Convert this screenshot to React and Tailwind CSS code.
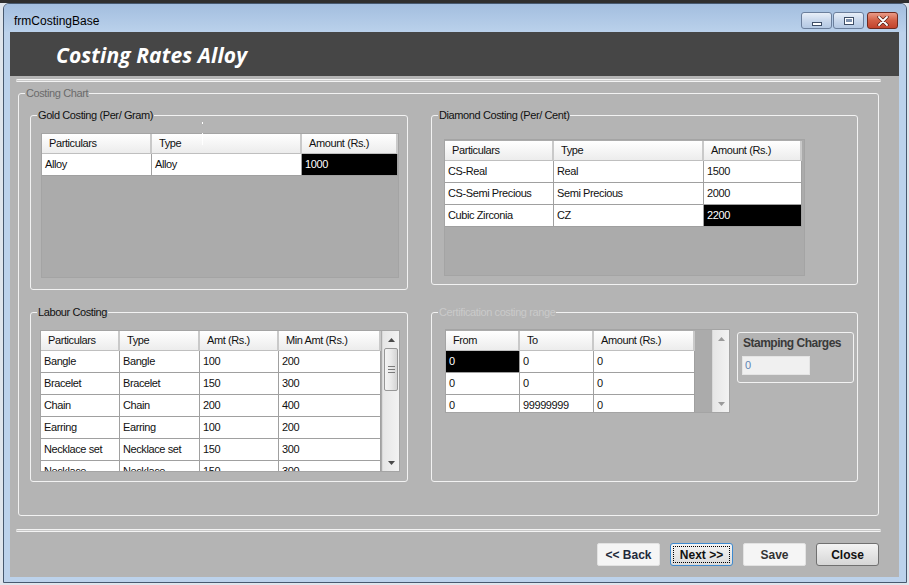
import React from 'react';

const goldCols = [
  { label: 'Particulars', w: 'w-[110px]' },
  { label: 'Type', w: 'w-[150px]' },
  { label: 'Amount (Rs.)', w: 'w-[96px]' },
];
const diamondCols = [
  { label: 'Particulars', w: 'w-[109px]' },
  { label: 'Type', w: 'w-[150px]' },
  { label: 'Amount (Rs.)', w: 'w-[98px]' },
];
const labourCols = [
  { label: 'Particulars', w: 'w-[79px]' },
  { label: 'Type', w: 'w-[80px]' },
  { label: 'Amt (Rs.)', w: 'w-[79px]' },
  { label: 'Min Amt (Rs.)', w: 'w-[102px]' },
];
const certCols = [
  { label: 'From', w: 'w-[74px]' },
  { label: 'To', w: 'w-[74px]' },
  { label: 'Amount (Rs.)', w: 'w-[101px]' },
];

const labourRows = [
  ['Bangle', 'Bangle', '100', '200'],
  ['Bracelet', 'Bracelet', '150', '300'],
  ['Chain', 'Chain', '200', '400'],
  ['Earring', 'Earring', '100', '200'],
  ['Necklace set', 'Necklace set', '150', '300'],
  ['Necklace', 'Necklace', '150', '300'],
];

function Arrow({ up, light }) {
  return (
    <svg width="7" height="4" viewBox="0 0 7 4">
      <path d={up ? 'M0 4 L3.5 0 L7 4 Z' : 'M0 0 L3.5 4 L7 0 Z'} fill={light ? '#9a9a9a' : '#4a4a4a'} />
    </svg>
  );
}

function ScrollBar({ thumb }) {
  return (
    <div className="w-[17px] shrink-0 flex flex-col bg-gradient-to-r from-[#e6e6e6] to-[#f2f2f2] border-l border-[#d9d9d9]">
      <div className="h-[17px] flex items-center justify-center">
        <Arrow up light={!thumb} />
      </div>
      <div className="flex-1">
        {thumb && (
          <div className="mx-[1px] h-[43px] rounded-[2px] border border-[#979797] bg-gradient-to-r from-[#f4f4f4] via-[#e9e9e9] to-[#d4d4d4] flex flex-col items-center justify-center gap-[2px]">
            <span className="w-[7px] h-px bg-[#7a7a7a]" />
            <span className="w-[7px] h-px bg-[#7a7a7a]" />
            <span className="w-[7px] h-px bg-[#7a7a7a]" />
          </div>
        )}
      </div>
      <div className="h-[17px] flex items-center justify-center">
        <Arrow light={!thumb} />
      </div>
    </div>
  );
}

function Grid({ cols, rows, sel, box, scroll, gapW, pad }) {
  return (
    <div className={`flex bg-[#ababab] border border-[#a4a4a4] overflow-hidden ${box}`}>
      <div className={`flex flex-col ${pad || ''}`}>
        <div className="flex h-[20px] shrink-0">
          {cols.map((c) => (
            <div
              key={c.label}
              className={`${c.w} h-[20px] pl-[7px] flex items-center bg-gradient-to-b from-white to-[#ececec] border-r-2 border-b border-r-[#c9c9c9] border-b-[#bfbfbf] text-[#111]`}
            >
              {c.label}
            </div>
          ))}
        </div>
        {rows.map((r, i) => (
          <div key={i} className="flex h-[22px] shrink-0">
            {r.map((v, j) => {
              const on = sel && sel[0] === i && sel[1] === j;
              return (
                <div
                  key={j}
                  className={`${cols[j].w} h-[22px] pl-[3px] flex items-center border-r border-b border-[#a0a0a0] ${
                    on ? 'bg-black text-white' : 'bg-white text-[#111]'
                  }`}
                >
                  {v}
                </div>
              );
            })}
          </div>
        ))}
      </div>
      {gapW && <div className={`${gapW} shrink-0`} />}
      {scroll}
    </div>
  );
}

function Legend({ children, tone }) {
  return (
    <legend className={`ml-[6px] px-[1px] text-[11px] leading-[14px] ${tone || 'text-[#111]'}`}>{children}</legend>
  );
}

function WinButton({ kind }) {
  if (kind === 'close') {
    return (
      <div className="w-[31px] h-[17px] rounded-[3px] border border-[#6e2a1f] bg-gradient-to-b from-[#e99a86] via-[#d25f45] to-[#c2432c] flex items-center justify-center">
        <svg width="12" height="10" viewBox="0 0 12 10">
          <path d="M2 1 L10 9 M10 1 L2 9" stroke="#5a2218" strokeWidth="3.4" strokeLinecap="round" />
          <path d="M2 1 L10 9 M10 1 L2 9" stroke="#ffffff" strokeWidth="1.8" strokeLinecap="round" />
        </svg>
      </div>
    );
  }
  return (
    <div className="w-[31px] h-[17px] rounded-[3px] border border-[#6b7f9c] bg-gradient-to-b from-[#e8eff8] via-[#c9d8ec] to-[#b3c8e3] flex items-center justify-center">
      {kind === 'min' ? (
        <span className="mt-[6px] w-[10px] h-[4px] bg-white border border-[#3e4e66]" />
      ) : (
        <span className="w-[10px] h-[8px] border border-[#3e4e66] bg-white flex items-center justify-center">
          <span className="w-[6px] h-[3px] bg-[#7f93b0]" />
        </span>
      )}
    </div>
  );
}

function Separator({ className }) {
  return <div className={`h-[3px] border-y border-[#f3f3f3] bg-[#c9c9c9] rounded-full ${className}`} />;
}

export default function App() {
  return (
    <div className="w-[909px] h-[585px] bg-[#dfe5ec] overflow-hidden font-['Liberation_Sans',Arial,sans-serif] text-[11px] tracking-[-0.4px]">
      <div className="h-[3px] bg-[#2f2f2f]" />
      <div className="ml-[3px] w-[904px] h-[580px] border border-[#47596f] rounded-t-[6px] bg-[#bcd2eb] flex flex-col">
        {/* title bar */}
        <div className="h-[28px] shrink-0 flex items-start pt-[8px] pl-[10px] pr-[8px] rounded-t-[5px] bg-gradient-to-b from-[#a3bedf] to-[#bad1eb]">
          <span className="pt-[1px] text-[12px] leading-[17px] tracking-normal text-black">frmCostingBase</span>
          <div className="ml-auto flex">
            <WinButton kind="min" />
            <div className="ml-[1px]">
              <WinButton kind="max" />
            </div>
            <div className="ml-[3px]">
              <WinButton kind="close" />
            </div>
          </div>
        </div>

        {/* client area */}
        <div className="ml-[6px] mr-[7px] h-[545px] shrink-0 bg-[#b4b4b4] flex flex-col">
          <div className="h-[44px] shrink-0 bg-[#464646] flex items-center pl-[46px] pt-[3px]">
            <span className="font-['Open_Sans',sans-serif] font-bold italic text-[21px] tracking-[0.1px] text-white">
              Costing Rates Alloy
            </span>
          </div>

          <Separator className="mt-[3px] ml-[6px] w-[865px]" />

          <fieldset className="mt-[4px] ml-[8px] w-[861px] border border-[#f2f2f2] rounded-[3px] pb-[33px]">
            <Legend tone="text-[#6b6b6b]">Costing Chart</Legend>
            <div className="grid grid-cols-[378px_427px] gap-x-[23px] gap-y-[15px] pt-[8px] pl-[11px]">
              <fieldset className="relative self-start border border-[#f2f2f2] rounded-[3px] pb-[11px]">
                <Legend>Gold Costing (Per/ Gram)</Legend>
                <span className="absolute left-[171px] top-0 w-px h-[2px] bg-white" />
                <span className="absolute left-[171px] top-[11px] w-px h-[12px] bg-white" />
                <div className="mt-[11px] ml-[10px]">
                  <Grid cols={goldCols} rows={[['Alloy', 'Alloy', '1000']]} sel={[0, 2]} box="w-[358px] h-[145px]" />
                </div>
              </fieldset>

              <fieldset className="self-start border border-[#f2f2f2] rounded-[3px] pb-[8px]">
                <Legend>Diamond Costing (Per/ Cent)</Legend>
                <div className="mt-[17px] ml-[12px]">
                  <Grid
                    cols={diamondCols}
                    rows={[
                      ['CS-Real', 'Real', '1500'],
                      ['CS-Semi Precious', 'Semi Precious', '2000'],
                      ['Cubic Zirconia', 'CZ', '2200'],
                    ]}
                    sel={[2, 2]}
                    box="w-[361px] h-[137px]"
                    pad="pt-[1px]"
                  />
                </div>
              </fieldset>

              <fieldset className="border border-[#f2f2f2] rounded-[3px] pb-[9px]">
                <Legend>Labour Costing</Legend>
                <div className="mt-[11px] ml-[9px]">
                  <Grid
                    cols={labourCols}
                    rows={labourRows}
                    box="w-[360px] h-[142px]"
                    gapW="w-px"
                    scroll={<ScrollBar thumb />}
                  />
                </div>
              </fieldset>

              <fieldset className="border border-[#f2f2f2] rounded-[3px]">
                <Legend tone="text-[#cacaca]">Certification costing range</Legend>
                <div className="mt-[10px] ml-[13px] flex items-start gap-[7px]">
                  <Grid
                    cols={certCols}
                    rows={[
                      ['0', '0', '0'],
                      ['0', '0', '0'],
                      ['0', '99999999', '0'],
                    ]}
                    sel={[0, 0]}
                    box="w-[285px] h-[84px]"
                    gapW="w-[17px]"
                    pad="pt-[1px]"
                    scroll={<ScrollBar />}
                  />
                  <div className="mt-[3px] w-[117px] h-[51px] border border-[#f2f2f2] rounded-[3px] pl-[4px] pt-[2px]">
                    <div className="pl-[1px] text-[12px] leading-[16px] font-bold tracking-[-0.5px] text-[#3a3a3a]">
                      Stamping Charges
                    </div>
                    <div className="mt-[5px] w-[68px] h-[19px] bg-[#f0f0f0] border border-[#e4e4e4] pl-[2px] flex items-center text-[#5f84b4]">
                      0
                    </div>
                  </div>
                </div>
              </fieldset>
            </div>
          </fieldset>

          <Separator className="mt-[13px] ml-[6px] w-[865px]" />

          <div className="mt-[11px] pr-[20px] flex justify-end gap-[10px] text-[12px] font-bold tracking-normal">
            <button className="w-[63px] h-[23px] rounded-[2px] bg-[#f5f5f5] border border-[#e2e2e2] text-[#1f2a3c]">
              &lt;&lt; Back
            </button>
            <button className="w-[63px] h-[23px] rounded-[3px] border border-[#3d8ad0] bg-gradient-to-b from-[#f4f4f4] to-[#dcdcdc] p-[2px] text-[#111]">
              <span className="w-full h-full flex items-center justify-center border border-dotted border-black">
                Next &gt;&gt;
              </span>
            </button>
            <button className="w-[63px] h-[23px] rounded-[2px] bg-[#f5f5f5] border border-[#e2e2e2] text-[#333]">
              Save
            </button>
            <button className="w-[63px] h-[23px] rounded-[3px] border border-[#707070] bg-gradient-to-b from-[#f3f3f3] to-[#d6d6d6] text-[#111]">
              Close
            </button>
          </div>
        </div>
      </div>
    </div>
  );
}
